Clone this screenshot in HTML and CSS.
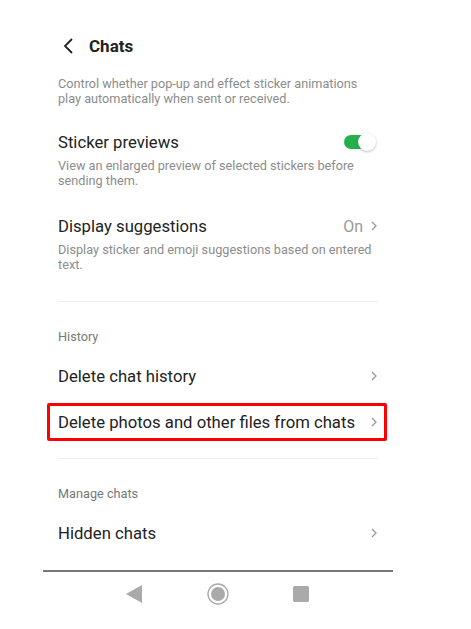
FILE: index.html
```html
<!DOCTYPE html>
<html lang="en">
<head>
    <meta charset="UTF-8">
    <meta name="viewport" content="width=device-width, initial-scale=1.0">
    <title>Chats settings</title>
    <link rel="stylesheet" href="styles.css">
</head>
<body>
    <div class="screen">
        <div class="content">
            <div class="header">
                <svg class="back" width="12" height="16" viewBox="0 0 12 16">
                    <polyline points="9,1 2,8 9,15" fill="none" stroke="#222" stroke-width="1.8"/>
                </svg>
                <span class="title">Chats</span>
            </div>

            <p class="intro">Control whether pop-up and effect sticker animations play automatically when sent or received.</p>

            <div class="setting">
                <div class="setting-row">
                    <span class="setting-name">Sticker previews</span>
                    <span class="toggle on"><span class="knob"></span></span>
                </div>
                <p class="setting-desc">View an enlarged preview of selected stickers before sending them.</p>
            </div>

            <div class="setting">
                <div class="setting-row">
                    <span class="setting-name">Display suggestions</span>
                    <span class="value">On
                        <svg class="chevron" width="6" height="10" viewBox="0 0 6 10"><polyline points="1,1 5,5 1,9" fill="none" stroke="#999" stroke-width="1.3"/></svg>
                    </span>
                </div>
                <p class="setting-desc">Display sticker and emoji suggestions based on entered text.</p>
            </div>

            <hr class="divider first">

            <div class="section-label">History</div>
            <div class="nav-row">
                <span class="setting-name">Delete chat history</span>
                <svg class="chevron" width="6" height="10" viewBox="0 0 6 10"><polyline points="1,1 5,5 1,9" fill="none" stroke="#999" stroke-width="1.3"/></svg>
            </div>
            <div class="nav-row highlight">
                <span class="setting-name">Delete photos and other files from chats</span>
                <svg class="chevron" width="6" height="10" viewBox="0 0 6 10"><polyline points="1,1 5,5 1,9" fill="none" stroke="#999" stroke-width="1.3"/></svg>
            </div>

            <hr class="divider">

            <div class="section-label">Manage chats</div>
            <div class="nav-row">
                <span class="setting-name">Hidden chats</span>
                <svg class="chevron" width="6" height="10" viewBox="0 0 6 10"><polyline points="1,1 5,5 1,9" fill="none" stroke="#999" stroke-width="1.3"/></svg>
            </div>
        </div>

        <div class="navbar">
            <svg width="16" height="18" viewBox="0 0 16 18"><polygon points="16,0 16,18 0,9" fill="#aaa"/></svg>
            <svg width="22" height="22" viewBox="0 0 22 22"><circle cx="11" cy="11" r="10" fill="none" stroke="#aaa" stroke-width="1.4"/><circle cx="11" cy="11" r="7" fill="#aaa"/></svg>
            <svg width="16" height="16" viewBox="0 0 16 16"><rect x="0" y="0" width="16" height="16" rx="1.5" fill="#aaa"/></svg>
        </div>
    </div>
</body>
</html>
```

FILE: styles.css
```css
body {
    margin: 0;
    background-color: #fff;
    font-family: Roboto, "Noto Sans", sans-serif;
    color: #222;
}

.screen {
    width: 350px;
    margin-left: 43px;
}

.content {
    padding: 31px 15px 0 15px;
}

.header {
    display: flex;
    align-items: center;
    height: 30px;
}

.back {
    margin-left: 5px;
    margin-right: 14px;
}

.title {
    font-size: 17px;
    font-weight: bold;
}

.intro,
.setting-desc {
    margin: 0;
    font-size: 12.7px;
    line-height: 15px;
    color: #8c8c8c;
}

.intro {
    margin-top: 15px;
}

.setting {
    margin-top: 27px;
}

.intro + .setting {
    margin-top: 25px;
}

.setting-row {
    display: flex;
    align-items: center;
    justify-content: space-between;
    height: 22px;
}

.setting-name {
    font-size: 16.7px;
}

.setting-desc {
    margin-top: 5px;
}

.toggle {
    position: relative;
    width: 32px;
    height: 18px;
    margin-right: 2px;
}

.toggle.on::before {
    content: "";
    position: absolute;
    left: 0;
    top: 2px;
    width: 26px;
    height: 14px;
    border-radius: 7px;
    background-color: #23b14d;
}

.knob {
    position: absolute;
    right: 0;
    top: 0;
    width: 18px;
    height: 18px;
    border-radius: 50%;
    background-color: #fff;
    box-shadow: 0 1px 3px rgba(0, 0, 0, 0.25);
}

.value {
    display: flex;
    align-items: center;
    gap: 8px;
    font-size: 16px;
    color: #999;
}

.chevron {
    margin-right: 1px;
}

.divider {
    border: none;
    border-top: 1px solid #eee;
    margin: 29px 0 0 0;
}

.divider + .section-label {
    margin-top: 27px;
}

.divider:not(.first) {
    margin-top: 17px;
}

.section-label {
    font-size: 12.7px;
    line-height: 16px;
    color: #777;
    margin-bottom: 8px;
}

.nav-row {
    display: flex;
    align-items: center;
    justify-content: space-between;
    height: 46px;
}

.nav-row.highlight {
    box-sizing: border-box;
    height: 38px;
    margin: 4px -9px 4px -11px;
    padding: 0 6px 0 8px;
    border: 3px solid #f00;
    border-radius: 2px;
}

.navbar {
    display: flex;
    align-items: center;
    justify-content: space-between;
    padding: 0 84px 0 83px;
    margin-top: 14px;
    height: 44px;
    border-top: 2px solid #777;
}
```
